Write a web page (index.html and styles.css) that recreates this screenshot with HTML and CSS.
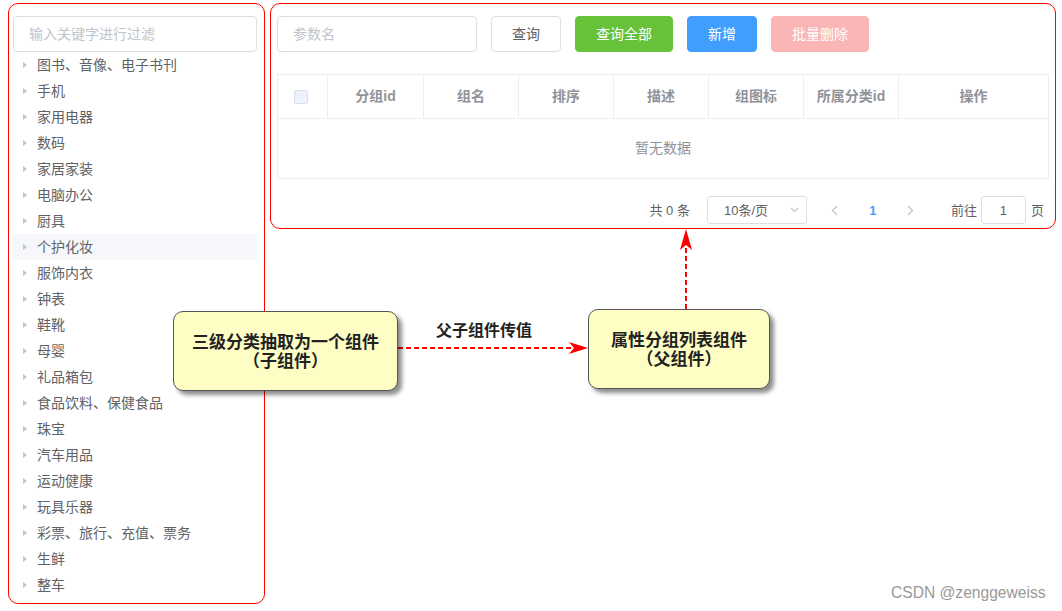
FILE: index.html
```html
<!DOCTYPE html>
<html lang="zh-CN">
<head>
<meta charset="utf-8">
<title>属性分组</title>
<link rel="stylesheet" href="styles.css">
</head>
<body>
<div class="page">
  <aside class="panel tree-panel">
    <input class="input filter" placeholder="输入关键字进行过滤">
    <ul class="tree">
      <li class="node"><span class="caret"></span><span class="label">图书、音像、电子书刊</span></li>
      <li class="node"><span class="caret"></span><span class="label">手机</span></li>
      <li class="node"><span class="caret"></span><span class="label">家用电器</span></li>
      <li class="node"><span class="caret"></span><span class="label">数码</span></li>
      <li class="node"><span class="caret"></span><span class="label">家居家装</span></li>
      <li class="node"><span class="caret"></span><span class="label">电脑办公</span></li>
      <li class="node"><span class="caret"></span><span class="label">厨具</span></li>
      <li class="node hover"><span class="caret"></span><span class="label">个护化妆</span></li>
      <li class="node"><span class="caret"></span><span class="label">服饰内衣</span></li>
      <li class="node"><span class="caret"></span><span class="label">钟表</span></li>
      <li class="node"><span class="caret"></span><span class="label">鞋靴</span></li>
      <li class="node"><span class="caret"></span><span class="label">母婴</span></li>
      <li class="node"><span class="caret"></span><span class="label">礼品箱包</span></li>
      <li class="node"><span class="caret"></span><span class="label">食品饮料、保健食品</span></li>
      <li class="node"><span class="caret"></span><span class="label">珠宝</span></li>
      <li class="node"><span class="caret"></span><span class="label">汽车用品</span></li>
      <li class="node"><span class="caret"></span><span class="label">运动健康</span></li>
      <li class="node"><span class="caret"></span><span class="label">玩具乐器</span></li>
      <li class="node"><span class="caret"></span><span class="label">彩票、旅行、充值、票务</span></li>
      <li class="node"><span class="caret"></span><span class="label">生鲜</span></li>
      <li class="node"><span class="caret"></span><span class="label">整车</span></li>
    </ul>
  </aside>

  <section class="panel main-panel">
    <div class="toolbar">
      <input class="input param" placeholder="参数名">
      <button class="btn btn-default">查询</button>
      <button class="btn btn-success">查询全部</button>
      <button class="btn btn-primary">新增</button>
      <button class="btn btn-danger-disabled">批量删除</button>
    </div>

    <div class="table">
      <div class="thead">
        <div class="th th-sel"><span class="checkbox"></span></div>
        <div class="th">分组id</div>
        <div class="th">组名</div>
        <div class="th">排序</div>
        <div class="th">描述</div>
        <div class="th">组图标</div>
        <div class="th">所属分类id</div>
        <div class="th th-last">操作</div>
      </div>
      <div class="empty">暂无数据</div>
    </div>

    <div class="pagination">
      <span class="total">共 0 条</span>
      <div class="sizes">
        <span class="sizes-text">10条/页</span>
        <svg class="sizes-arrow" width="9" height="6" viewBox="0 0 9 6"><path d="M1 1 L4.5 4.5 L8 1" fill="none" stroke="#c0c4cc" stroke-width="1.1"/></svg>
      </div>
      <span class="pg-btn"><svg width="7" height="11" viewBox="0 0 7 11"><path d="M6 1 L1.5 5.5 L6 10" fill="none" stroke="#c0c4cc" stroke-width="1.3"/></svg></span>
      <span class="pg-btn pg-active">1</span>
      <span class="pg-btn"><svg width="7" height="11" viewBox="0 0 7 11"><path d="M1 1 L5.5 5.5 L1 10" fill="none" stroke="#c0c4cc" stroke-width="1.3"/></svg></span>
      <span class="jump">前往</span>
      <span class="editor">1</span>
      <span class="jump-end">页</span>
    </div>
  </section>
</div>

<svg class="arrows" width="1062" height="611" viewBox="0 0 1062 611">
  <line x1="398" y1="348" x2="574" y2="348" stroke="#f00" stroke-width="2" stroke-dasharray="5 3"/>
  <polygon points="588,348 569,342 574,348 569,354" fill="#f00"/>
  <line x1="686" y1="309" x2="686" y2="246" stroke="#f00" stroke-width="2" stroke-dasharray="5 3"/>
  <polygon points="686,229 692,250 686,245 680,250" fill="#f00"/>
</svg>

<div class="note note-child">
  <span class="note-line">三级分类抽取为一个组件</span>
  <span class="note-line">（子组件）</span>
</div>
<div class="note note-parent">
  <span class="note-line">属性分组列表组件</span>
  <span class="note-line">（父组件）</span>
</div>
<div class="edge-label">父子组件传值</div>
<div class="watermark">CSDN @zenggeweiss</div>
</body>
</html>
```

FILE: styles.css
```css
* {
  box-sizing: border-box;
  margin: 0;
  padding: 0;
}

body {
  margin: 0;
  width: 1062px;
  height: 611px;
  position: relative;
  overflow: hidden;
  background: #fff;
  font-family: "Liberation Sans", "Noto Sans CJK SC", sans-serif;
  color: #606266;
}

.page {
  display: flex;
  align-items: flex-start;
  gap: 5px;
  padding: 3px 0 0 8px;
}

.panel {
  border: 1px solid #f00;
  border-radius: 10px;
  background: #fff;
}

/* ---------- left tree panel ---------- */
.tree-panel {
  width: 257px;
  height: 601px;
  padding: 12px 7px 5px 4px;
}

.input {
  display: block;
  height: 36px;
  border: 1px solid #dcdfe6;
  border-radius: 4px;
  padding: 0 15px;
  font-family: "Liberation Sans", "Noto Sans CJK SC", sans-serif;
  font-size: 14px;
  color: #606266;
  background: #fff;
  outline: none;
}

.input::placeholder {
  color: #c0c4cc;
}

.filter {
  width: 244px;
}

.tree {
  list-style: none;
  width: 244px;
}

.node {
  display: flex;
  align-items: center;
  height: 26px;
  font-size: 14px;
  color: #606266;
}

.node .label {
  position: relative;
  top: -1px;
}

.node.hover {
  background: #f5f7fa;
}

.caret {
  width: 0;
  height: 0;
  margin: 0 10px 0 10px;
  border-left: 4px solid #c0c4cc;
  border-top: 3.5px solid transparent;
  border-bottom: 3.5px solid transparent;
}

/* ---------- right main panel ---------- */
.main-panel {
  width: 786px;
  height: 226px;
  padding: 12px 6px 4px 6px;
}

.toolbar {
  display: flex;
  align-items: center;
  height: 36px;
}

.param {
  width: 200px;
}

.btn {
  height: 36px;
  margin-left: 14px;
  padding: 0 20px;
  border: 1px solid #dcdfe6;
  border-radius: 4px;
  font-family: "Liberation Sans", "Noto Sans CJK SC", sans-serif;
  font-size: 14px;
  line-height: 1;
  background: #fff;
  color: #606266;
}

.btn-success {
  background: #67c23a;
  border-color: #67c23a;
  color: #fff;
}

.btn-primary {
  background: #409eff;
  border-color: #409eff;
  color: #fff;
}

.btn-danger-disabled {
  background: #fab6b6;
  border-color: #fab6b6;
  color: #fff;
}

.table {
  margin-top: 22px;
  border: 1px solid #ebeef5;
}

.thead {
  display: grid;
  grid-template-columns: 50px 96px 95px 95px 95px 95px 95px 1fr;
  border-bottom: 1px solid #ebeef5;
}

.th {
  height: 43px;
  display: flex;
  align-items: center;
  justify-content: center;
  padding-bottom: 3px;
  border-right: 1px solid #ebeef5;
  font-size: 14px;
  font-weight: bold;
  color: #909399;
}

.th-sel {
  justify-content: flex-start;
  padding-left: 16px;
  padding-bottom: 0;
}

.th-last {
  border-right: none;
}

.checkbox {
  width: 14px;
  height: 14px;
  border: 1px solid #dcdfe6;
  border-radius: 2px;
  background: #edf2fc;
}

.empty {
  height: 59px;
  display: flex;
  align-items: center;
  justify-content: center;
  padding-bottom: 3px;
  font-size: 14px;
  color: #909399;
}

.pagination {
  margin-top: 17px;
  height: 28px;
  display: flex;
  align-items: center;
  justify-content: flex-end;
  padding-right: 5px;
  font-size: 13px;
  color: #606266;
}

.total,
.jump,
.jump-end,
.sizes-text {
  position: relative;
  top: -1px;
}

.total {
  margin-right: 17px;
}

.sizes {
  width: 100px;
  height: 28px;
  border: 1px solid #dcdfe6;
  border-radius: 3px;
  display: flex;
  align-items: center;
  padding-left: 16px;
  padding-right: 7px;
  justify-content: space-between;
  margin-right: 9px;
}

.pg-btn {
  width: 38px;
  height: 28px;
  display: flex;
  align-items: center;
  justify-content: center;
}

.pg-active {
  color: #409eff;
  font-weight: bold;
}

.jump {
  margin-left: 21px;
}

.editor {
  width: 45px;
  height: 28px;
  margin-left: 4px;
  border: 1px solid #dcdfe6;
  border-radius: 3px;
  display: flex;
  align-items: center;
  justify-content: center;
}

.jump-end {
  margin-left: 5px;
}

/* ---------- annotation overlay ---------- */
.arrows {
  position: absolute;
  left: 0;
  top: 0;
  pointer-events: none;
}

.note {
  position: absolute;
  display: flex;
  flex-direction: column;
  align-items: center;
  justify-content: center;
  text-align: center;
  padding-bottom: 3px;
  background: #fefec4;
  border: 1px solid #555;
  border-radius: 10px;
  box-shadow: 4px 4px 4px rgba(0, 0, 0, 0.45);
  font-family: "Noto Sans CJK SC", sans-serif;
  font-size: 17px;
  font-weight: bold;
  color: #222;
}

.note-line {
  display: block;
  height: 19px;
  line-height: 19px;
  overflow: visible;
}

.note-child {
  left: 173px;
  top: 311px;
  width: 225px;
  height: 80px;
}

.note-parent {
  left: 588px;
  top: 309px;
  width: 182px;
  height: 80px;
}

.edge-label {
  position: absolute;
  left: 436px;
  top: 319px;
  font-family: "Noto Sans CJK SC", sans-serif;
  font-size: 16px;
  font-weight: bold;
  line-height: 20px;
  color: #222;
}

.watermark {
  position: absolute;
  left: 891px;
  top: 584px;
  font-family: "Liberation Sans", sans-serif;
  font-size: 15.6px;
  line-height: 18px;
  color: #999;
}
```
